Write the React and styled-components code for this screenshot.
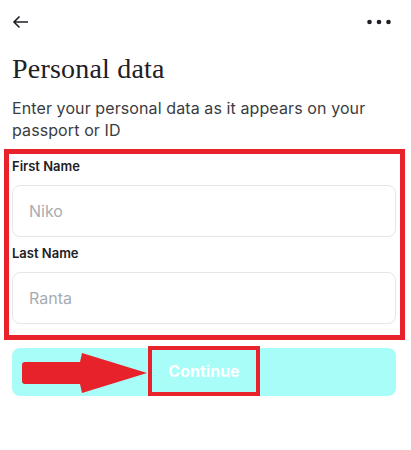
import React from "react";
import styled, { createGlobalStyle } from "styled-components";

const GlobalStyle = createGlobalStyle`
  body {
    margin: 0;
    background: #ffffff;
    font-family: "Inter", "Liberation Sans", sans-serif;
    color: #1e2025;
  }
`;

const Page = styled.div`
  width: 411px;
  min-height: 450px;
  background: #ffffff;
`;

const TopBar = styled.div`
  height: 44px;
  display: flex;
  align-items: center;
  justify-content: space-between;
  padding: 0 20px 0 12px;
`;

const IconButton = styled.button`
  border: none;
  background: none;
  padding: 0;
  display: flex;
  align-items: center;
  color: #1e2025;
`;

const Title = styled.h1`
  margin: 8px 12px 0;
  font-family: "Liberation Serif", serif;
  font-weight: 400;
  font-size: 28px;
  line-height: 34px;
  color: #1e2025;
  letter-spacing: 0.2px;
`;

const Subtitle = styled.p`
  margin: 11px 12px 0;
  font-size: 16px;
  line-height: 22px;
  color: #3a3c41;
  letter-spacing: 0.1px;
`;

const Highlight = styled.div`
  margin: 8px 6px 0 4px;
  border: 5px solid #e8222b;
  padding: 2px 4px 11px 3px;
`;

const Field = styled.div`
  display: flex;
  flex-direction: column;
  & + & {
    margin-top: 6px;
  }
`;

const Label = styled.label`
  font-size: 13px;
  font-weight: 600;
  line-height: 20px;
  margin-bottom: 9px;
  color: #1e2025;
`;

const Input = styled.input`
  box-sizing: border-box;
  height: 52px;
  border: 1px solid #e4e6e8;
  border-radius: 8px;
  padding: 0 16px;
  font-family: inherit;
  font-size: 16px;
  outline: none;
  &::placeholder {
    color: #a8acb1;
  }
`;

const ButtonRow = styled.div`
  padding: 8px 15px 0 12px;
`;

const ContinueButton = styled.button`
  position: relative;
  width: 100%;
  height: 48px;
  border: none;
  border-radius: 8px;
  background: #a8fdf8;
  display: flex;
  align-items: center;
  justify-content: center;
  padding: 0;
  font-family: inherit;
`;

const ButtonText = styled.span`
  box-sizing: border-box;
  width: 112px;
  height: 50px;
  border: 4px solid #e8222b;
  display: flex;
  align-items: center;
  justify-content: center;
  color: #ffffff;
  font-size: 16px;
  font-weight: 700;
  margin-top: -3px;
`;

const Pointer = styled.svg`
  position: absolute;
  left: 10px;
  top: 4px;
`;

export default function App() {
  return (
    <Page>
      <GlobalStyle />
      <TopBar>
        <IconButton aria-label="Back">
          <svg width="17" height="14" viewBox="0 0 17 14" fill="none">
            <path d="M16 7H2M7.5 1.5L2 7l5.5 5.5" stroke="#1e2025" strokeWidth="1.6" />
          </svg>
        </IconButton>
        <IconButton aria-label="More">
          <svg width="24" height="6" viewBox="0 0 24 6">
            <circle cx="2.5" cy="3" r="2.3" fill="#1e2025" />
            <circle cx="12" cy="3" r="2.3" fill="#1e2025" />
            <circle cx="21.5" cy="3" r="2.3" fill="#1e2025" />
          </svg>
        </IconButton>
      </TopBar>
      <Title>Personal data</Title>
      <Subtitle>Enter your personal data as it appears on your passport or ID</Subtitle>
      <Highlight>
        <Field>
          <Label>First Name</Label>
          <Input placeholder="Niko" />
        </Field>
        <Field>
          <Label>Last Name</Label>
          <Input placeholder="Ranta" />
        </Field>
      </Highlight>
      <ButtonRow>
        <ContinueButton>
          <Pointer width="126" height="42" viewBox="0 0 126 42">
            <path
              d="M3 10H58L60 1L125 21L60 41L58 32H3Q0 32 0 29V13Q0 10 3 10Z"
              fill="#e8222b"
            />
          </Pointer>
          <ButtonText>Continue</ButtonText>
        </ContinueButton>
      </ButtonRow>
    </Page>
  );
}
